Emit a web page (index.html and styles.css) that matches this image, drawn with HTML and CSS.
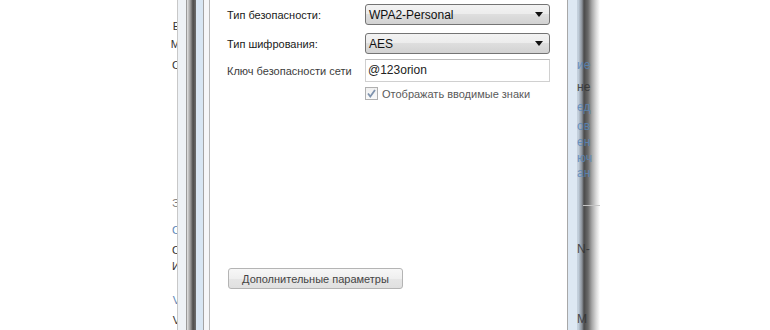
FILE: index.html
```html
<!DOCTYPE html>
<html lang="ru">
<head>
    <meta charset="UTF-8">
    <meta name="viewport" content="width=device-width, initial-scale=1.0">
    <title>Свойства беспроводной сети</title>
    <link rel="stylesheet" href="styles.css">
</head>
<body>

<div class="screen">
    <!-- window behind, left -->
    <div class="behind-left">
        <span class="frag dark gap-20">Е</span>
        <span class="frag dark gap-6">М</span>
        <span class="frag dark gap-9">С</span>
        <span class="frag dim gap-126">Э</span>
        <span class="frag blue gap-15">С</span>
        <span class="frag dark gap-8">С</span>
        <span class="frag dark gap-4">И</span>
        <span class="frag blue gap-22">V</span>
        <span class="frag dark gap-8">V</span>
    </div>

    <div class="frame-left"></div>

    <div class="dialog">
        <div class="row row-first">
            <label class="field-label">Тип безопасности:</label>
            <div class="combo">
                <span>WPA2-Personal</span>
                <svg class="arrow" width="8" height="5" viewBox="0 0 8 5"><path d="M0 0H8L4 5Z" fill="#111"/></svg>
            </div>
        </div>

        <div class="row row-second">
            <label class="field-label">Тип шифрования:</label>
            <div class="combo">
                <span>AES</span>
                <svg class="arrow" width="8" height="5" viewBox="0 0 8 5"><path d="M0 0H8L4 5Z" fill="#111"/></svg>
            </div>
        </div>

        <div class="row row-key">
            <label class="field-label muted">Ключ безопасности сети</label>
            <div class="text-box">@123orion</div>
        </div>

        <div class="check-row">
            <span class="check-box">
                <svg width="11" height="11" viewBox="0 0 11 11"><path d="M2 5.5 L4.3 8.5 L9 2" fill="none" stroke="#7f93ad" stroke-width="1.8"/></svg>
            </span>
            <span class="check-label">Отображать вводимые знаки</span>
        </div>

        <button class="advanced">Дополнительные параметры</button>
    </div>

    <!-- right frame with window behind showing through -->
    <div class="frame-right">
        <span class="rfrag blue rgap-59">ие</span>
        <span class="rfrag dark rgap-10">не</span>
        <span class="rfrag blue rgap-8">ед</span>
        <span class="rfrag blue rgap-7">ов</span>
        <span class="rfrag blue rgap-4">ен</span>
        <span class="rfrag blue rgap-4">юч</span>
        <span class="rfrag blue rgap-3">ан</span>
        <span class="rule"></span>
        <span class="rfrag dark rgap-37">N-</span>
        <span class="rfrag dark rgap-58">M</span>
    </div>

    <div class="behind-right"></div>
</div>

</body>
</html>
```

FILE: styles.css
```css
body {
    margin: 0;
    background: #fff;
    font-family: "Liberation Sans", Arial, sans-serif;
    font-size: 11px;
    color: #1e1e1e;
}

.screen {
    display: flex;
    width: 770px;
    height: 330px;
    overflow: hidden;
}

/* background window fragments */
.behind-left {
    width: 177px;
    flex: none;
    display: flex;
    flex-direction: column;
    align-items: flex-end;
    overflow: hidden;
}

.frag {
    display: block;
    height: 12px;
    line-height: 12px;
    font-size: 11px;
    margin-right: -3px;
}

.dark { color: #333; }
.dim { color: #777; }
.blue { color: #5a86b8; }

.gap-4 { margin-top: 4px; }
.gap-6 { margin-top: 6px; }
.gap-8 { margin-top: 8px; }
.gap-9 { margin-top: 9px; }
.gap-15 { margin-top: 15px; }
.gap-20 { margin-top: 20px; }
.gap-22 { margin-top: 22px; }
.gap-126 { margin-top: 126px; }

.frame-left {
    width: 33px;
    flex: none;
    background: linear-gradient(to right,
        #c8c8c8 0 1px,
        #eef2f6 1px 9px,
        #9a9a9a 9px 10px,
        #e4e4e4 10px,
        #8a8a8a 14px,
        #4c4c4c 16px,
        #6e6e6e 19px,
        #d8e6f3 19px 26px,
        #a4a4a4 26px 27px,
        #f6f7f9 27px 32px,
        #b8b8b8 32px 33px);
}

.frame-right {
    width: 33px;
    flex: none;
    display: flex;
    flex-direction: column;
    align-items: flex-start;
    padding-left: 10px;
    box-sizing: border-box;
    overflow: hidden;
    background: linear-gradient(to right,
        #a8a8a8 0 1px,
        #dde8f3 1px 10px,
        #c4d0dc 10px 11px,
        #c6d4e2 11px,
        #8a9098 15px,
        #4a4a4a 17px,
        #6a6a6a 21px,
        #a8a8a8 25px,
        #d8d8d8 29px,
        #fff 33px);
}

.rfrag {
    display: block;
    flex: none;
    height: 12px;
    line-height: 12px;
    font-size: 12px;
    white-space: nowrap;
    opacity: 0.85;
}

.rgap-3 { margin-top: 3px; }
.rgap-4 { margin-top: 4px; }
.rgap-7 { margin-top: 7px; }
.rgap-8 { margin-top: 8px; }
.rgap-10 { margin-top: 10px; }
.rgap-37 { margin-top: 37px; }
.rgap-58 { margin-top: 58px; }
.rgap-59 { margin-top: 59px; }

.rule {
    display: block;
    flex: none;
    width: 27px;
    height: 1px;
    margin-top: 26px;
    margin-left: 6px;
    background: #c4c4c4;
}

.behind-right {
    flex: 1;
}

/* dialog content */
.dialog {
    width: 357px;
    flex: none;
    padding: 4px 0 0 17px;
    box-sizing: border-box;
    background: #fff;
}

.row {
    display: flex;
    align-items: center;
}

.row-second { margin-top: 8px; }
.row-key { margin-top: 5px; }

.field-label {
    width: 138px;
    flex: none;
    white-space: nowrap;
    color: #1a1a1a;
}

.field-label.muted {
    color: #3c3c3c;
}

.combo {
    width: 185px;
    height: 21px;
    box-sizing: border-box;
    border: 1px solid #747474;
    border-radius: 3px;
    background: linear-gradient(#f3f3f3, #ececec 50%, #dedede 50%, #d2d2d2);
    display: flex;
    align-items: center;
    justify-content: space-between;
    padding: 0 6px 0 3px;
    font-size: 12px;
    color: #111;
}

.text-box {
    width: 185px;
    height: 23px;
    box-sizing: border-box;
    border: 1px solid #d0d0d0;
    border-top-color: #bcbcbc;
    padding-left: 2px;
    line-height: 21px;
    font-size: 12px;
    color: #222;
}

.check-row {
    display: flex;
    align-items: center;
    margin-top: 5px;
    padding-left: 138px;
}

.check-box {
    width: 13px;
    height: 13px;
    box-sizing: border-box;
    border: 1px solid #b0b0b0;
    background: linear-gradient(#f0f0f0, #fafafa);
    display: flex;
    align-items: center;
    justify-content: center;
}

.check-label {
    margin-left: 4px;
    white-space: nowrap;
    color: #5a5a5a;
}

.advanced {
    display: block;
    width: 175px;
    height: 21px;
    margin: 168px 0 0 1px;
    padding: 0;
    border: 1px solid #b4b4b4;
    border-radius: 3px;
    background: linear-gradient(#f7f7f7, #efefef 50%, #e6e6e6 50%, #e0e0e0);
    font-family: "Liberation Sans", Arial, sans-serif;
    font-size: 11px;
    color: #444;
}
```
